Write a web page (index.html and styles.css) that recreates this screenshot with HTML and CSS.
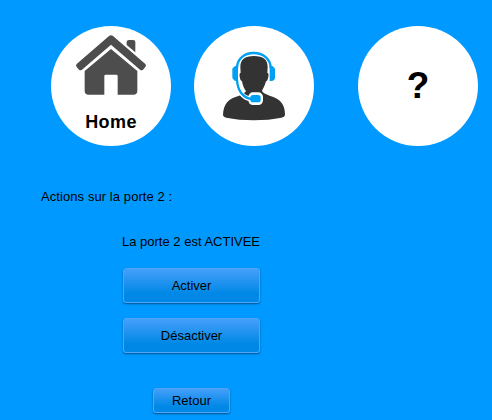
FILE: index.html
```html
<!DOCTYPE html>
<html lang="fr">
<head>
<meta charset="utf-8">
<title>Porte 2</title>
<link rel="stylesheet" href="styles.css">
</head>
<body>
<nav class="nav">
  <a class="round home">
    <svg class="house" viewBox="90 42 216 186" aria-hidden="true">
      <path fill="#4d4d4d" d="M245 67Q245 60 252 60H264Q271 60 271 67V97L245 75Z"/>
      <path fill="#4d4d4d" d="M192 48Q198 43 204 48L301 132Q305 136 301 141L294 149Q290 153 285 149L198 74L111 149Q106 153 102 149L95 141Q91 136 95 132Z"/>
      <path fill="#4d4d4d" d="M198 87L277 153V212Q277 224 265 224H218V168Q218 164 214 164H182Q178 164 178 168V224H131Q119 224 119 212V153Z"/>
    </svg>
    <span class="home-label">Home</span>
  </a>
  <a class="round support">
    <svg class="agent" viewBox="18 18 360 360" aria-hidden="true">
      <path fill="#333" d="M198 108C226 108 239 118 239 142L238 158Q243 160 241 170Q239 182 234 184C230 198 225 206 222 213Q226 221 245 227C276 236 292 252 291 286Q290 291 280 293C232 303 163 303 115 293Q105 290 105 284C107 252 121 236 151 228Q168 222 174 214C169 207 164 197 162 184Q156 181 155 170Q153 160 158 158L157 142C157 118 170 108 198 108Z"/>
      <path fill="none" stroke="#fff" stroke-width="14" d="M147 183C149 212 164 235 190 237"/>
      <rect x="181" y="217" width="44" height="38" rx="14" fill="#fff"/>
      <path fill="none" stroke="#00a0f5" stroke-width="7" d="M147 145C147 116 169 99 197 99S248 116 248 145M147 180C149 211 164 234 191 237"/>
      <path fill="#00a0f5" d="M150 137V183H144Q138 183 138 180Q133 177 133 172V147Q133 143 138 142Q139 137 144 137ZM245 137H251Q256 137 257 142Q261 143 261 148V170Q261 175 260 177Q258 183 251 183H245Z"/>
      <rect x="187" y="225" width="31" height="22" rx="8" fill="#00a0f5"/>
    </svg>
  </a>
  <a class="round help">?</a>
</nav>
<main class="content">
  <p class="title">Actions sur la porte 2 :</p>
  <div class="panel">
    <p class="status">La porte 2 est ACTIVEE</p>
    <button class="btn">Activer</button>
    <button class="btn">Désactiver</button>
    <button class="btn back">Retour</button>
  </div>
</main>
</body>
</html>
```
FILE: styles.css
```css
* { box-sizing: border-box; }
body {
  margin: 0;
  height: 420px;
  overflow: hidden;
  background: #0099ff;
  color: #000;
  font: 13px/16px "Liberation Sans", Arial, sans-serif;
}
.nav {
  display: flex;
  padding: 26px 0 0 51px;
}
.round {
  display: flex;
  flex: none;
  align-items: center;
  justify-content: center;
  width: 120px;
  height: 120px;
  border-radius: 50%;
  background: #fff;
}
.home {
  flex-direction: column;
  justify-content: flex-start;
  padding-top: 8px;
}
.house { width: 72px; height: 62px; }
.home-label {
  margin-top: 15px;
  font: bold 18px/22px "Liberation Sans", Arial, sans-serif;
  letter-spacing: .4px;
}
.support { margin-left: 23px; }
.agent { width: 120px; height: 120px; }
.help {
  margin-left: 44px;
  font: bold 37px/42px "Liberation Sans", Arial, sans-serif;
}
.content { padding: 43px 0 0 41px; }
.title, .status { margin: 0; }
.title { letter-spacing: .08px; }
.panel {
  display: flex;
  flex-direction: column;
  align-items: flex-start;
  width: 137px;
  margin: 29px 0 0 82px;
}
.status { white-space: nowrap; margin: 0 0 3px -1px; }
.btn {
  width: 137px;
  height: 35px;
  margin: 15px 0 0;
  padding: 0;
  border: 1px solid #4fa5fa;
  border-radius: 3px;
  background: linear-gradient(#459ffa, #0088e6 75%, #0088e6);
  background-clip: padding-box;
  box-shadow: 0 1px 2px rgba(0, 0, 0, .45);
  color: #000;
  font: inherit;
}
.back { width: 77px; height: 25px; margin: 35px 0 0 30px; }
```
